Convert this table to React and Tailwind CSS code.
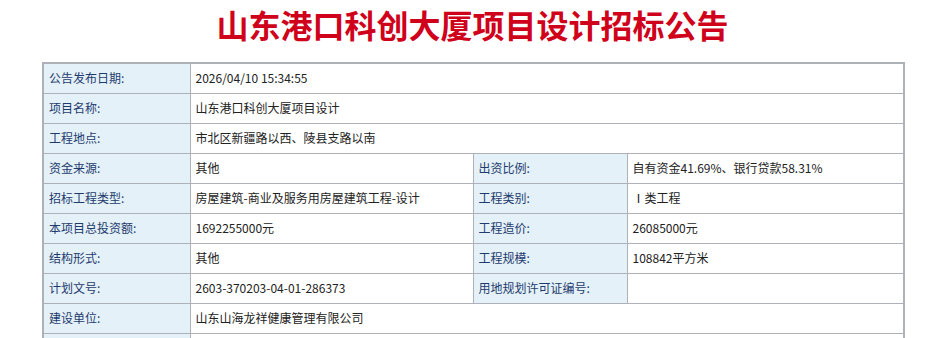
const rows = [
  [['公告发布日期:', '2026/04/10 15:34:55']],
  [['项目名称:', '山东港口科创大厦项目设计']],
  [['工程地点:', '市北区新疆路以西、陵县支路以南']],
  [['资金来源:', '其他'], ['出资比例:', '自有资金41.69%、银行贷款58.31%']],
  [['招标工程类型:', '房屋建筑-商业及服务用房屋建筑工程-设计'], ['工程类别:', 'Ⅰ类工程']],
  [['本项目总投资额:', '1692255000元'], ['工程造价:', '26085000元']],
  [['结构形式:', '其他'], ['工程规模:', '108842平方米']],
  [['计划文号:', '2603-370203-04-01-286373'], ['用地规划许可证编号:', '']],
  [['建设单位:', '山东山海龙祥健康管理有限公司']],
  [['', '']],
]

const label = 'bg-[#e4f1f8] text-[#1f3b6e] border border-[#aeb2b8] pl-[5px] h-[30px] align-middle'
const value = 'bg-white text-[#222] border border-[#aeb2b8] pl-[5px] h-[30px] align-middle'

export default function App() {
  return (
    <div className="w-[939px] h-[338px] bg-white overflow-hidden font-['Noto_Sans_CJK_SC',sans-serif] text-[12px]">
      <h1 className="h-[48px] leading-[48px] text-center pl-[6px] text-[32px] font-bold text-[#d0021b] tracking-[0px]">
        山东港口科创大厦项目设计招标公告
      </h1>
      <table className="ml-[42px] mt-[14px] w-[861px] table-fixed border-collapse border-2 border-[#aeb2b8]">
        <colgroup>
          <col className="w-[147px]" />
          <col className="w-[283px]" />
          <col className="w-[154px]" />
          <col className="w-[277px]" />
        </colgroup>
        <tbody>
          {rows.map((r, i) => (
            <tr key={i}>
              {r.length === 1 ? (
                <>
                  <td className={label}>{r[0][0]}</td>
                  <td className={value} colSpan={3}>{r[0][1]}</td>
                </>
              ) : (
                r.map(([l, v]) => (
                  <React.Fragment key={l}>
                    <td className={label}>{l}</td>
                    <td className={value}>{v}</td>
                  </React.Fragment>
                ))
              )}
            </tr>
          ))}
        </tbody>
      </table>
    </div>
  )
}

import React from 'react'
